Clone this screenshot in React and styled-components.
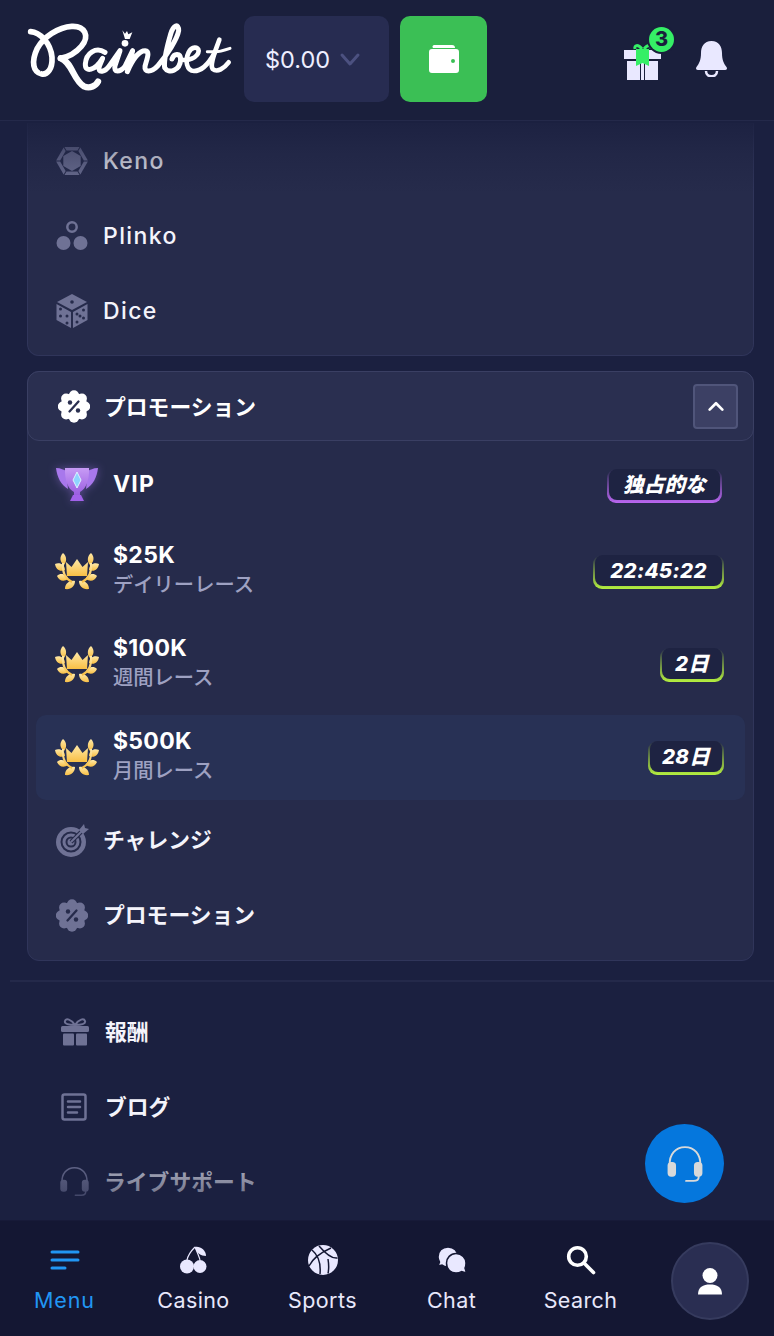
import React from "react";
import styled, { createGlobalStyle } from "styled-components";

const Global = createGlobalStyle`
  html, body { margin: 0; padding: 0; background: #1b2040; }
  * { box-sizing: border-box; }
  body { font-family: Inter, "Noto Sans CJK JP", sans-serif; }
`;

const Screen = styled.div`
  width: 774px; height: 1336px; display: flex; flex-direction: column;
  overflow: hidden; position: relative; background: #1b2040; color: #fff;
`;
const Header = styled.header`
  height: 121px; flex: none; display: flex; align-items: center; padding: 0 46px 2px 10px;
  background: #1a1f3c; border-bottom: 1px solid #24294a;
`;
const Logo = styled.svg`width: 224px; height: 93px; flex: none; margin-bottom: 7px;`;
const Balance = styled.button`
  margin-left: 10px; width: 145px; height: 86px; border: 0; border-radius: 10px; background: #272c51;
  display: flex; align-items: center; gap: 9px; padding: 0 0 0 21px; color: #eef; font: 400 23.5px Inter, sans-serif;
`;
const WalletButton = styled.button`
  margin-left: 11px; width: 87px; height: 86px; border: 0; border-radius: 10px; background: #3bbf55;
  display: flex; align-items: center; justify-content: center;
`;
const HeaderIcons = styled.div`margin-left: auto; display: flex; align-items: center; gap: 33px;`;
const GiftWrap = styled.div`position: relative; width: 38px; height: 38px; margin-top: 3px;`;
const CountBadge = styled.span`
  position: absolute; top: -15px; right: -12px; width: 25px; height: 25px; border-radius: 50%;
  background: #35ef66; box-shadow: 0 0 0 2px #1a1f3c; color: #1a1f3c; font: 800 20px/25px Inter, sans-serif; text-align: center;
`;
const Scroll = styled.main`
  flex: 1; position: relative; overflow: hidden; display: flex; flex-direction: column; padding-top: 2px;
`;
const FadeTop = styled.div`
  position: absolute; left: 0; right: 0; top: 0; height: 72px; pointer-events: none;
  background: linear-gradient(#1b2040e0 0%, #1b204060 45%, #1b204000 100%);
`;
const FadeBottom = styled.div`
  position: absolute; left: 0; right: 0; bottom: 0; height: 70px; pointer-events: none;
  background: linear-gradient(#1b204000, #1b2040c8);
`;
const Card = styled.section`
  margin: ${p => p.$gapTop || 0}px 20px 0 27px; background: #262b4b; border: 1px solid #30355a; border-radius: 12px;
  padding-bottom: 7px;
  ${p => p.$cut && "border-top: 0; border-top-left-radius: 0; border-top-right-radius: 0;"}
`;
const Row = styled.div`
  height: 75px; display: flex; align-items: center; padding-left: 28px; gap: ${p => p.$gap || 15}px;
  font: ${p => p.$cjk ? "700 21.8px" : "500 23px"} Inter, "Noto Sans CJK JP", sans-serif;
  letter-spacing: ${p => p.$cjk ? "0" : "1.4px"};
  color: #f4f4fb;
`;
const Label = styled.span`margin-bottom: ${p => p.$lift ?? 4}px;`;
const SectionHead = styled.div`
  height: 70px; margin: -1px -1px 0; display: flex; align-items: center; gap: 14px; padding: 0 15px 0 30px;
  background: #2a2f50; border: 1px solid #3a3f63; border-radius: 12px;
  font: 700 21.8px "Noto Sans CJK JP", sans-serif;
`;
const Toggle = styled.button`
  margin-left: auto; width: 45px; height: 45px; border-radius: 4px; background: #3c4064; border: 2px solid #50557a;
  display: flex; align-items: center; justify-content: center; padding: 0;
`;
const List = styled.div`padding: 5px 8px 3px 8px;`;
const Race = styled.div`
  height: ${p => p.$h || 85}px; margin-top: ${p => p.$mt ?? 8}px; border-radius: 10px; display: flex; align-items: center;
  padding: 0 21px 0 19px; gap: 14px;
  background: ${p => p.$active ? "#283155" : "transparent"};
`;
const RaceText = styled.div`display: flex; flex-direction: column; padding-bottom: 7px;`;
const RaceTitle = styled.span`font: 700 23px/29px Inter, sans-serif; letter-spacing: .3px; color: #fff;`;
const VipTitle = styled(RaceTitle)`letter-spacing: 1.2px;`;
const RaceSub = styled.span`font: 500 20.3px/26px "Noto Sans CJK JP", sans-serif; color: #9ea1c2;`;
const BadgeFrame = styled.div`
  margin: ${p => p.$offset || 0}px ${p => p.$right || 0}px 0 auto; width: ${p => p.$w}px; border-radius: 9px; padding: 0 2px 3px;
  background: linear-gradient(#262b4b 0%, ${p => p.$color} 100%);
`;
const BadgeInner = styled.div`
  height: 31px; border-radius: 8px; background: #1e2342; display: flex; align-items: center; justify-content: center;
  font: italic 800 20.5px/31px Inter, "Noto Sans CJK JP", sans-serif; color: #fff; letter-spacing: .3px;
`;
const Divider = styled.hr`margin: 19px 0 12px 10px; border: 0; border-top: 2px solid #24294a; flex: none;`;
const PlainRow = styled(Row)`padding-left: ${p => p.$left || 61}px; gap: ${p => p.$gap || 16}px; color: ${p => p.$dim ? "#c9cad8" : "#f4f4fb"};`;
const SupportFab = styled.button`
  position: absolute; right: 50px; bottom: 17px; width: 79px; height: 79px; border-radius: 50%; border: 0; background: #0577dd;
  display: flex; align-items: center; justify-content: center; padding: 0;
`;
const Nav = styled.nav`
  height: 116px; flex: none; display: flex; background: #141733; border-top: 1px solid #171a38;
`;
const NavItem = styled.button`
  width: 129px; border: 0; background: none; padding: 24px 0 0; display: flex; flex-direction: column; align-items: center; gap: 12px;
  font: 400 21.5px Inter, sans-serif; letter-spacing: ${p => p.$active ? ".9px" : ".4px"}; color: ${p => p.$active ? "#2196f3" : "#e8e8fb"};
`;
const NavIcon = styled.span`height: 30px; display: flex; align-items: center; justify-content: center;`;
const Avatar = styled.button`
  margin: 21px 0 0 26px; width: 78px; height: 78px; border-radius: 50%; background: #2a2e52; border: 2px solid #363b5e;
  display: flex; align-items: center; justify-content: center; padding: 0;
`;
const TrophyArt = styled.svg`width: 44px; height: 38px; filter: drop-shadow(0 0 5px #a77bf070);`;

const GREY = "#6f7295";

const LogoMark = () => (
  <Logo viewBox="0 0 672 279" fill="none" stroke="#fff" strokeLinecap="round" strokeLinejoin="round">
    <path strokeWidth="17" d="M62 68 C88 70 122 100 126 145 C128 180 112 198 95 195 C70 190 62 160 82 118 C100 85 145 54 185 52 C225 50 240 82 214 112 C197 132 172 144 152 148" />
    <path strokeWidth="19" d="M152 148 C187 160 190 215 222 232 C240 240 258 230 264 218" />
    {/* a, i, n and the rising stroke of b */}
    <path strokeWidth="15" d="M285 130 C258 112 228 132 226 165 C225 192 255 185 278 148 L268 172 C262 195 285 190 300 168 L330 125 L315 170 C310 192 330 190 345 172 L368 125 L352 188 C368 150 388 125 405 125 C422 127 410 150 405 172 C402 192 425 190 442 172 C470 140 502 90 506 65 C506 42 490 48 482 75 C472 110 460 150 464 176 C476 196 510 185 512 152 C512 132 492 132 486 150" />
    {/* e */}
    <path strokeWidth="14" d="M512 150 C530 160 565 145 566 126 C565 112 545 112 536 130 C524 155 530 186 552 186 C578 186 598 160 612 135" />
    {/* t */}
    <path strokeWidth="14" d="M628 92 C615 130 598 165 608 180 C622 192 642 178 656 160" />
    <path strokeWidth="9" d="M592 128 C615 130 640 126 660 118" />
    <circle cx="345" cy="103" r="10" fill="#fff" stroke="none" />
    <path fill="#fff" stroke="none" d="M337 64 L345 74 L351 66 L355 76 L367 70 L359 90 L345 90 Z" />
    <path stroke="#1a1f3c" strokeWidth="3" d="M86 150 C80 165 84 180 92 186" />
  </Logo>
);
const Chevron = ({ up, c = "#4c5180", s = 22 }) => (
  <svg width={s} height={s} viewBox="0 0 22 22" fill="none" stroke={c} strokeWidth="3" strokeLinecap="round" strokeLinejoin="round">
    <path d={up ? "M4 15 L11 8 L18 15" : "M3 7 L11 16 L19 7"} />
  </svg>
);
const Wallet = () => (
  <svg width="32" height="30" viewBox="0 0 32 30">
    <path fill="#fff" d="M6 1h18a3 3 0 0 1 3 3H5a2 2 0 0 0 0 0 2 2 0 0 1 1-3z" />
    <path fill="#fff" fillRule="evenodd" d="M4 5h24a3 3 0 0 1 3 3v18a3 3 0 0 1-3 3H4a3 3 0 0 1-3-3V8a3 3 0 0 1 3-3zm21 10a2 2 0 1 0 0 4 2 2 0 0 0 0-4z" />
  </svg>
);
const Gift = () => (
  <svg width="38" height="38" viewBox="0 0 38 38">
    <path fill="none" stroke="#35ef66" strokeWidth="3" d="M18 7 C14 2 10 3 11 7 M20 7 C24 2 28 3 27 7" />
    <rect x="0" y="8" width="37" height="9" fill="#e9e8ff" />
    <rect x="3" y="19" width="13" height="19" fill="#e9e8ff" />
    <rect x="21" y="19" width="13" height="19" fill="#e9e8ff" />
    <rect x="17" y="19" width="3" height="19" fill="#e9e8ff" />
    <path fill="#35ef66" d="M12 7h13v17l-6.500-3-6.500 3z" />
  </svg>
);
const Bell = () => (
  <svg width="33" height="36" viewBox="0 0 33 36">
    <path fill="#e9e8ff" d="M16.500 0c7.500 0 10.500 6 10.500 12 0 7 2 11 4.500 14 1 1.500.5 3-1.500 3H3c-2 0-2.500-1.500-1.500-3C4 23 6 19 6 12 6 6 9 0 16.500 0z" />
    <path fill="none" stroke="#e9e8ff" strokeWidth="2.500" d="M11 30c0 7 11 7 11 0" />
  </svg>
);
const Keno = () => (
  <svg width="32" height="32" viewBox="0 0 32 32" fill={GREY}>
    <polygon points="16,6 24.700,11 24.700,21 16,26 7.300,21 7.300,11" />
    {[0, 60, 120, 180, 240, 300].map(a => (
      <polygon key={a} points="8.500,2 23.500,2 21.500,5.500 10.500,5.500" transform={`rotate(${a} 16 16)`} />
    ))}
  </svg>
);
const Plinko = () => (
  <svg width="32" height="30" viewBox="0 0 32 30" fill={GREY}>
    <circle cx="16" cy="6" r="4.700" fill="none" stroke={GREY} strokeWidth="2.500" />
    <circle cx="7.500" cy="22" r="7" />
    <circle cx="24.500" cy="22" r="7" />
  </svg>
);
const Dice = () => (
  <svg width="32" height="34" viewBox="0 0 32 34" fill={GREY}>
    <polygon points="16,0 31,8 16,16 1,8" />
    <polygon points="0.500,10 15,18 15,34 0.500,26" />
    <polygon points="31.500,10 17,18 17,34 31.500,26" />
    <g fill="#262b4b">
      <circle cx="16" cy="8" r="1.800" />
      <circle cx="4.500" cy="15" r="1.500" /><circle cx="11" cy="22" r="1.500" /><circle cx="4.500" cy="22" r="1.500" /><circle cx="11" cy="29" r="1.500" />
      <circle cx="21" cy="20" r="1.500" /><circle cx="27.500" cy="16" r="1.500" /><circle cx="24" cy="22" r="1.500" /><circle cx="21" cy="28" r="1.500" /><circle cx="27.500" cy="24" r="1.500" />
    </g>
  </svg>
);
const PercentFlower = ({ fill, ink }) => (
  <svg width="32" height="33" viewBox="0 0 32 33" fill={fill}>
    <circle cx="16" cy="16.500" r="13.500" />
    {[0, 45, 90, 135, 180, 225, 270, 315].map(a => (
      <circle key={a} cx="16" cy="5.300" r="5" transform={`rotate(${a} 16 16.500)`} />
    ))}
    <g fill={ink}>
      <circle cx="12" cy="12.500" r="2.200" />
      <circle cx="20" cy="20.500" r="2.200" />
    </g>
    <path stroke={ink} strokeWidth="2.300" strokeLinecap="round" d="M20.500 11.500 L11.500 21.500" />
  </svg>
);
const Trophy = () => (
  <TrophyArt viewBox="0 0 44 38">
    <defs>
      <linearGradient id="cup" x1="0" y1="0" x2="0" y2="1">
        <stop offset="0" stopColor="#c79bf5" /><stop offset="1" stopColor="#9a5ee0" />
      </linearGradient>
    </defs>
    <path fill="#a878ec" d="M1 3 C6 3 9 5 11 6 L13 24 C6 20 2 12 1 3z M43 3 C38 3 35 5 33 6 L31 24 C38 20 42 12 43 3z" />
    <path fill="url(#cup)" d="M10 3 H34 C34.500 15 31 24 25 27 V30 H19 V27 C13 24 9.500 15 10 3z" />
    <path fill="#a262ea" d="M18 30 H26 L29 36 H15z" />
    <polygon fill="#8fd4ff" stroke="#dff0ff" strokeWidth="1" points="22,7 26,15 22,23 18,15" />
  </TrophyArt>
);
const Laurel = () => (
  <svg width="44" height="38" viewBox="0 0 44 38">
    <defs>
      <linearGradient id="gold" x1="0" y1="0" x2="0" y2="1">
        <stop offset="0" stopColor="#ffe9a8" /><stop offset="1" stopColor="#f8bf45" />
      </linearGradient>
    </defs>
    <g fill="url(#gold)">
      <path d="M11 9 L16.500 14 L22 6 L27.500 14 L33 9 L32 23 H12z" />
      <path d="M8 0 C12 3 12 9 9 12 C5 9 4 4 8 0z M36 0 C32 3 32 9 35 12 C39 9 40 4 36 0z" />
      <path d="M0 11 C5 9 10 12 10 17 C5 19 1 17 0 11z M44 11 C39 9 34 12 34 17 C39 19 43 17 44 11z" />
      <path d="M2 23 C6 19 12 22 13 26 C9 29 4 28 2 23z M42 23 C38 19 32 22 31 26 C35 29 40 28 42 23z" />
      <path d="M10 36 C10 30 15 27 20 28 C20 33 16 37 10 36z M34 36 C34 30 29 27 24 28 C24 33 28 37 34 36z" />
    </g>
    <path fill="none" stroke="url(#gold)" strokeWidth="2" d="M8 10 C7 20 11 26 17 29 M36 10 C37 20 33 26 27 29" />
  </svg>
);
const Target = () => (
  <svg width="33" height="33" viewBox="0 0 33 33">
    <circle cx="15" cy="18" r="15" fill={GREY} />
    <circle cx="15" cy="18" r="9.500" fill="none" stroke="#262b4b" strokeWidth="2" />
    <circle cx="15" cy="18" r="4.500" fill="none" stroke="#262b4b" strokeWidth="2" />
    <path stroke="#262b4b" strokeWidth="4" d="M15 18 L26 7" />
    <path stroke={GREY} strokeWidth="2" d="M15 18 L26 7" />
    <path fill={GREY} d="M23 6 L28 0 L29 4 L33 5 L27 10z" />
  </svg>
);
const RewardGift = () => (
  <svg width="28" height="28" viewBox="0 0 28 28" fill={GREY}>
    <path fill="none" stroke={GREY} strokeWidth="2" d="M14 7 C10 1 5 0 4 3 C3 6 8 7 14 7 C20 7 25 6 24 3 C23 0 18 1 14 7z" />
    <rect x="0" y="8" width="28" height="6" rx="1.500" />
    <rect x="2" y="15.500" width="11" height="12" rx="1" />
    <rect x="15" y="15.500" width="11" height="12" rx="1" />
  </svg>
);
const Blog = () => (
  <svg width="26" height="28" viewBox="0 0 26 28" fill="none" stroke={GREY} strokeWidth="2.500">
    <rect x="1.500" y="1.500" width="23" height="25" rx="2" />
    <path strokeLinecap="round" d="M7 8.500H19M7 14H19M7 19.500H16" />
  </svg>
);
const Headset = ({ w, c, pad }) => (
  <svg width={w} height={w} viewBox="0 0 36 36" fill="none" stroke={c} strokeWidth="1.800" strokeLinecap="round">
    <path d="M3.500 19 C3 9 9 2 18 2 C27 2 33 9 32.500 19" />
    <rect x="1.500" y="16" width="8" height="14" rx="3.500" fill={pad} stroke="none" />
    <rect x="26.500" y="16" width="8" height="14" rx="3.500" fill={pad} stroke="none" />
    <path d="M31 30 C31 33 29 34 26 34 H19" />
  </svg>
);
const Bars = () => (
  <svg width="30" height="20" viewBox="0 0 30 20" fill="none" stroke="#2196f3" strokeWidth="3" strokeLinecap="round">
    <path d="M2 2H28M2 10H28M2 18H15" />
  </svg>
);
const Cherry = () => (
  <svg width="27" height="28" viewBox="0 0 27 28" fill="#e9e8ff">
    <circle cx="7" cy="20.500" r="7" />
    <circle cx="20" cy="20.500" r="6.500" />
    <path fill="none" stroke="#e9e8ff" strokeWidth="1.200" d="M15 1 C11 5 8 9 7 14 M15 1 C17 6 19 10 20 14" />
    <path d="M15 1 C20 0 26 4 26 10 C21 10 16 7 15 1z" />
  </svg>
);
const Ball = () => (
  <svg width="30" height="30" viewBox="0 0 30 30">
    <circle cx="15" cy="15" r="15" fill="#e9e8ff" />
    <path fill="none" stroke="#141733" strokeWidth="1.500" d="M4 5 C10 10 13 18 12 29 M11 1 C17 8 24 14 29.500 13 M23 3 C14 7 5 13 1 21 M20 14 C21 20 21 24 20 28.500" />
  </svg>
);
const Bubbles = () => (
  <svg width="30" height="28" viewBox="0 0 30 28" fill="#e9e8ff" stroke="#141733" strokeWidth="1.500">
    <path d="M11 1 C17 1 21 5 21 11 C21 17 16 21 11 21 C8 21 6 20 5 19 L1 20 L2.500 16 C1.500 14 1 12.500 1 11 C1 5 5 1 11 1z" />
    <path d="M19 7.500 C25 7.500 29 12 29 17 C29 19 28.500 21 28 22 L29.500 27 L24.500 25.500 C23 26.500 21 27 19 27 C13.500 27 9.500 23 9.500 17 C9.500 12 13.500 7.500 19 7.500z" />
  </svg>
);
const Magnifier = () => (
  <svg width="30" height="30" viewBox="0 0 30 30" fill="none" stroke="#fff" strokeWidth="3.600" strokeLinecap="round">
    <circle cx="11.500" cy="11.500" r="8.800" />
    <path d="M18 18 L27.500 27.500" />
  </svg>
);
const Person = () => (
  <svg width="26" height="27" viewBox="0 0 26 27" fill="#fff">
    <circle cx="13" cy="7.500" r="7.500" />
    <path d="M1 26.500 C1 19 6 16.500 13 16.500 C20 16.500 25 19 25 26.500z" />
  </svg>
);

const races = [
  { title: "$25K", sub: "デイリーレース", time: "22:45:22", w: 131, mt: 7 },
  { title: "$100K", sub: "週間レース", time: "2日", w: 64 },
  { title: "$500K", sub: "月間レース", time: "28日", w: 76, active: true },
];
const navItems = [
  { label: "Menu", icon: <Bars />, active: true },
  { label: "Casino", icon: <Cherry /> },
  { label: "Sports", icon: <Ball /> },
  { label: "Chat", icon: <Bubbles /> },
  { label: "Search", icon: <Magnifier /> },
];

export default function App() {
  return (
    <Screen>
      <Global />
      <Header>
        <LogoMark />
        <Balance>$0.00 <Chevron /></Balance>
        <WalletButton aria-label="wallet"><Wallet /></WalletButton>
        <HeaderIcons>
          <GiftWrap><Gift /><CountBadge>3</CountBadge></GiftWrap>
          <Bell />
        </HeaderIcons>
      </Header>
      <Scroll>
        <Card $cut>
          <Row><Keno />Keno</Row>
          <Row><Plinko />Plinko</Row>
          <Row><Dice />Dice</Row>
        </Card>
        <Card $gapTop={15}>
          <SectionHead>
            <PercentFlower fill="#fff" ink="#2a2f50" />
            <Label $lift={2}>プロモーション</Label>
            <Toggle aria-label="collapse"><Chevron up c="#fff" s={20} /></Toggle>
          </SectionHead>
          <List>
            <Race $h={76} $mt={0}>
              <Trophy />
              <VipTitle>VIP</VipTitle>
              <BadgeFrame $color="#b966f0" $w={115} $offset={4} $right={2}><BadgeInner>独占的な</BadgeInner></BadgeFrame>
            </Race>
            {races.map(r => (
              <Race key={r.title} $active={r.active} $mt={r.mt}>
                <Laurel />
                <RaceText>
                  <RaceTitle>{r.title}</RaceTitle>
                  <RaceSub>{r.sub}</RaceSub>
                </RaceText>
                <BadgeFrame $color="#b4ef3f" $w={r.w}><BadgeInner>{r.time}</BadgeInner></BadgeFrame>
              </Race>
            ))}
          </List>
          <Row $cjk $gap={14}><Target /><Label>チャレンジ</Label></Row>
          <Row $cjk><PercentFlower fill={GREY} ink="#262b4b" /><Label>プロモーション</Label></Row>
        </Card>
        <Divider />
        <PlainRow $cjk><RewardGift /><Label $lift={3}>報酬</Label></PlainRow>
        <PlainRow $cjk $gap={18}><Blog /><Label $lift={3}>ブログ</Label></PlainRow>
        <PlainRow $cjk $left={59} $gap={14} $dim><Headset w={31} c={GREY} pad={GREY} /><Label $lift={3}>ライブサポート</Label></PlainRow>
        <FadeTop />
        <FadeBottom />
        <SupportFab aria-label="support"><Headset w={38} c="#d9d9d9" pad="#d9d9d9" /></SupportFab>
      </Scroll>
      <Nav>
        {navItems.map(n => (
          <NavItem key={n.label} $active={n.active}>
            <NavIcon>{n.icon}</NavIcon>
            {n.label}
          </NavItem>
        ))}
        <Avatar aria-label="profile"><Person /></Avatar>
      </Nav>
    </Screen>
  );
}
